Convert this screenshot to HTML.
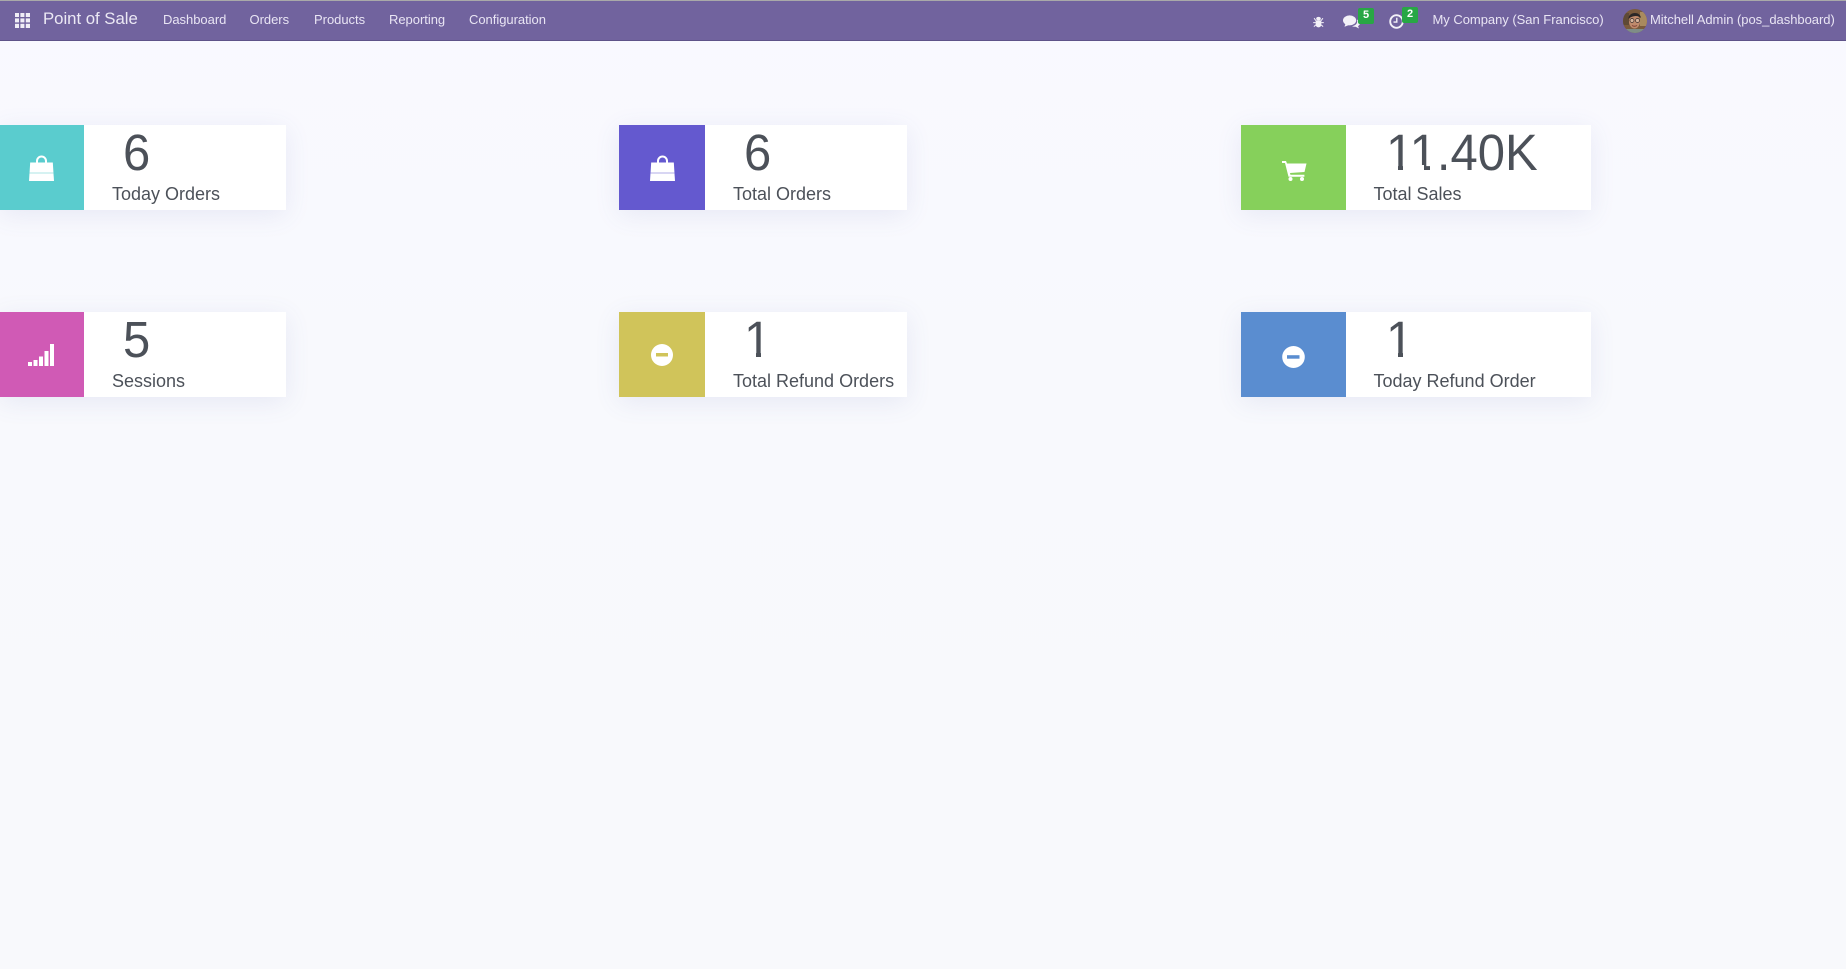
<!DOCTYPE html>
<html><head><meta charset="utf-8"><title>Point of Sale</title>
<style>
html,body{margin:0;padding:0}
body{width:1846px;height:969px;overflow:hidden;position:relative;background:linear-gradient(180deg,#f9f9ff 0,#f8f9fd 360px,#f8f9fc 100%);font-family:"Liberation Sans",sans-serif}
.top{position:absolute;left:0;top:0;width:1846px;height:1px;background:#a9a9a9;z-index:3}
.nav{position:absolute;left:0;top:0;width:1846px;height:40px;background:#71639e;border-bottom:1px solid #5f5389}
.t{position:absolute;white-space:nowrap;color:#e9e5f4;font-size:13px;line-height:16px;top:12px;letter-spacing:-.03px}
.card{position:absolute;height:85px;background:#fff;box-shadow:0 5px 24px rgba(90,100,170,.11)}
.ic{position:absolute;left:0;top:0;height:85px}
.n{position:absolute;top:-1px;font-size:49px;line-height:60px;color:#4c5159;white-space:nowrap;transform:scaleY(1.05);transform-origin:0 47px}
.l{position:absolute;top:58px;font-size:18px;line-height:22px;color:#4c5159;white-space:nowrap}
.k{position:absolute;top:39.5px;height:8px;background:#fff}
svg{position:absolute;display:block}
.b{position:absolute;background:#28a745;color:#fff;font-size:11px;font-weight:bold;line-height:14px;height:16px;width:16px;text-align:center;border-radius:2px}
</style></head><body>
<div class="top"></div>
<div class="nav"></div>

<svg style="left:14.500px;top:13px" width="15" height="15" viewBox="0 0 15 15" fill="#f0eef6"><rect x="0" y="0" width="4" height="4"/><rect x="5.4" y="0" width="4" height="4"/><rect x="10.8" y="0" width="4.2" height="4"/><rect x="0" y="5.4" width="4" height="4"/><rect x="5.4" y="5.4" width="4" height="4"/><rect x="10.8" y="5.4" width="4.2" height="4"/><rect x="0" y="10.8" width="4" height="4.2"/><rect x="5.4" y="10.8" width="4" height="4.2"/><rect x="10.8" y="10.8" width="4.2" height="4.2"/></svg>
<div class="t" style="left:43px;top:9px;font-size:16.800px;line-height:20px;color:#ebe8f4">Point of Sale</div>
<div class="t" style="left:163px">Dashboard</div>
<div class="t" style="left:249.500px">Orders</div>
<div class="t" style="left:314px">Products</div>
<div class="t" style="left:389px">Reporting</div>
<div class="t" style="left:469px">Configuration</div>

<svg style="left:1312.500px;top:16px" width="11" height="11.500" viewBox="0 0 12 13" fill="#f3f1f8"><ellipse cx="6" cy="3" rx="2.6" ry="2"/><path d="M2.8 5h6.400v4.500c0 2-1.400 3.300-3.200 3.300s-3.200-1.300-3.200-3.300z"/><path d="M1 2.500l2 2.700M11 2.500L9 5.200M0 7.500h3M12 7.500H9M.8 12l2.200-2M11.200 12L9 10" stroke="#f3f1f8" stroke-width="1.100" fill="none"/></svg>
<svg style="left:1343px;top:15px" width="17" height="14" viewBox="0 0 17 14" fill="#f3f1f8"><ellipse cx="6.600" cy="5.400" rx="6.600" ry="5"/><path d="M2.500 8.500L1.500 11.800 6 10z"/><path d="M14 4.500c1.800.8 3 2.200 3 3.600 0 1.300-.8 2.300-2 3l1 2.400-3.400-1.800c-1 .2-2.600 0-3.600-.6 3.800-.3 6-3.200 5-6.600z"/></svg>
<div class="b" style="left:1358px;top:8px">5</div>
<svg style="left:1389px;top:14px" width="15" height="15" viewBox="0 0 16 16" fill="none" stroke="#f3f1f8"><circle cx="8" cy="8" r="6.700" stroke-width="2"/><path d="M8.300 4v4.600H4.800" stroke-width="1.500"/></svg>
<div class="b" style="left:1402px;top:7px">2</div>
<div class="t" style="left:1432.500px">My Company (San Francisco)</div>
<svg style="left:1623px;top:9px" width="24" height="24" viewBox="0 0 24 24"><defs><clipPath id="a"><circle cx="12" cy="12" r="12"/></clipPath></defs><g clip-path="url(#a)"><rect width="24" height="24" fill="#7a5a3c"/><rect x="17" y="3" width="7" height="14" fill="#a98a5e"/><rect x="0" y="4" width="6" height="12" fill="#5f4a36"/><ellipse cx="11.500" cy="12.500" rx="5.500" ry="7" fill="#c08a6c"/><path d="M5.500 10C5 3 17 1.500 18 9 15 6 9 6.500 5.500 10z" fill="#2b2727"/><circle cx="9" cy="11.500" r="2" fill="#d8b49b" stroke="#332c2c" stroke-width=".7"/><circle cx="14.500" cy="11.500" r="2" fill="#d8b49b" stroke="#332c2c" stroke-width=".7"/><path d="M9 16.500q2.500 1.500 5 0" stroke="#7d3f33" stroke-width="1" fill="none"/><rect x="3" y="20" width="18" height="5" fill="#7f8d87"/></g></svg>
<div class="t" style="left:1650px">Mitchell Admin (pos_dashboard)</div>

<!-- Row 1 -->
<div class="card" style="left:0;top:125px;width:286px">
  <div class="ic" style="width:84px;background:#5accce"></div>
  <svg style="left:29px;top:30px" width="25" height="26" viewBox="0 0 25 26"><path d="M8 9V6a4.500 4.500 0 0 1 9 0V9" fill="none" stroke="#fff" stroke-width="2"/><path d="M1.200 7.500h22.600L25 26H0z" fill="#fff"/><rect x=".6" y="17.500" width="23.800" height="1" fill="#5accce" opacity=".5"/></svg>
  <div class="n" style="left:123px">6</div>
  <div class="l" style="left:112px">Today Orders</div>
</div>
<div class="card" style="left:619px;top:125px;width:288px">
  <div class="ic" style="width:86px;background:#6459cf"></div>
  <svg style="left:31px;top:30px" width="25" height="26" viewBox="0 0 25 26"><path d="M8 9V6a4.500 4.500 0 0 1 9 0V9" fill="none" stroke="#fff" stroke-width="2"/><path d="M1.200 7.500h22.600L25 26H0z" fill="#fff"/><rect x=".6" y="17.500" width="23.800" height="1" fill="#6459cf" opacity=".5"/></svg>
  <div class="n" style="left:125px">6</div>
  <div class="l" style="left:114px">Total Orders</div>
</div>
<div class="card" style="left:1241px;top:125px;width:350px">
  <div class="ic" style="width:105px;background:#86d05b"></div>
  <svg style="left:41px;top:36px" width="25" height="20" viewBox="0 0 25 20" fill="#fff"><path d="M0 0h4l1 2.500h19.500l-2 8.500-14.500 1 .4 1.800h14v2H6.500L3 2H0z"/><circle cx="8.500" cy="18" r="2"/><circle cx="20" cy="18" r="2"/></svg>
  <div class="n" style="left:145px">11.40K</div>
  <div class="k" style="left:147px;width:10.300px"></div><div class="k" style="left:162px;width:21.200px"></div>
  <div class="k" style="left:188.800px;width:10.200px"></div>
  <div class="l" style="left:132.500px">Total Sales</div>
</div>

<!-- Row 2 -->
<div class="card" style="left:0;top:312px;width:286px">
  <div class="ic" style="width:84px;background:#d05ab5"></div>
  <svg style="left:28px;top:32px" width="26" height="22" viewBox="0 0 26 22" fill="#fff"><rect x="0" y="18" width="4" height="4"/><rect x="5.500" y="16" width="4" height="6"/><rect x="11" y="12.500" width="4" height="9.500"/><rect x="16.500" y="7" width="4" height="15"/><rect x="22" y="0" width="4" height="22"/></svg>
  <div class="n" style="left:123px">5</div>
  <div class="l" style="left:112px">Sessions</div>
</div>
<div class="card" style="left:619px;top:312px;width:288px">
  <div class="ic" style="width:86px;background:#d0c45a"></div>
  <svg style="left:32px;top:32px" width="22" height="22" viewBox="0 0 22 22"><circle cx="11" cy="11" r="11" fill="#fff"/><rect x="5" y="9" width="12" height="3.500" fill="#d0c45a"/></svg>
  <div class="n" style="left:125px">1</div>
  <div class="k" style="left:127px;width:10.300px"></div><div class="k" style="left:142px;width:10px"></div>
  <div class="l" style="left:114px">Total Refund Orders</div>
</div>
<div class="card" style="left:1241px;top:312px;width:350px">
  <div class="ic" style="width:105px;background:#5a8dd0"></div>
  <svg style="left:41px;top:34px" width="23" height="22" viewBox="0 0 23 22"><ellipse cx="11.500" cy="11" rx="11.300" ry="11" fill="#fff"/><rect x="5" y="9.200" width="12.500" height="3.500" fill="#5a8dd0"/></svg>
  <div class="n" style="left:145px">1</div>
  <div class="k" style="left:147px;width:10.300px"></div><div class="k" style="left:162px;width:10px"></div>
  <div class="l" style="left:132.500px">Today Refund Order</div>
</div>
</body></html>
